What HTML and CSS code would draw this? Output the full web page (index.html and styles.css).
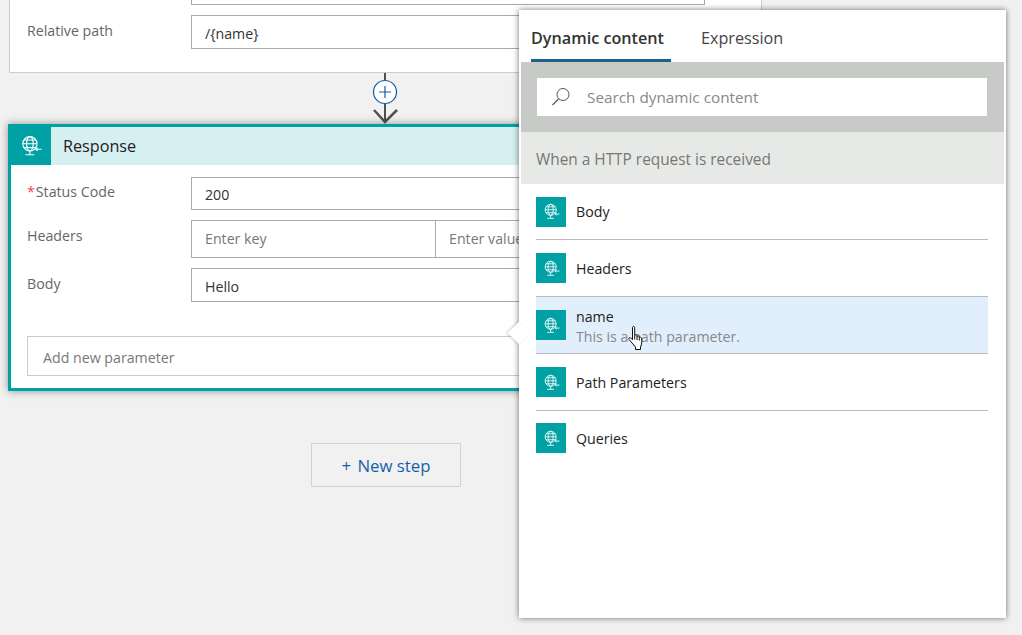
FILE: index.html
```html
<!DOCTYPE html>
<html lang="en">
<head>
  <meta charset="UTF-8" />
  <title>Response - Dynamic content</title>
  <link rel="stylesheet" href="styles.css">
</head>
<body>
  <svg class="defs" width="0" height="0">
    <symbol id="globe" viewBox="0 0 20 20">
      <g fill="none" stroke="#fff" stroke-width="1">
        <circle cx="9" cy="8" r="6.5" />
        <ellipse cx="9" cy="8" rx="3" ry="6.5" />
        <path d="M2.5 8h13M3.5 4.5h11M3.5 11.5h11M9 14.5v3M5 18h8" />
        <path d="M19.5 13h-5M16 11.5l-1.7 1.5 1.7 1.500" />
      </g>
    </symbol>
  </svg>

  <div class="canvas">
    <div class="card top-card">
      <div class="input-stub"></div>
      <div class="row">
        <label class="label">Relative path</label>
        <div class="input">/{name}</div>
      </div>
    </div>

    <svg class="connector" width="26" height="51" viewBox="0 0 26 51">
      <path d="M13 0v50" stroke="#505050" stroke-width="2" fill="none" />
      <path d="M2 37l11 12 12-12" stroke="#505050" stroke-width="2.500" fill="none" />
      <circle cx="13" cy="19" r="11.500" fill="#fff" stroke="#0f5ea8" stroke-width="1.200" />
      <path d="M13 13v12M7 19h12" stroke="#0f5ea8" stroke-width="1.200" fill="none" />
    </svg>

    <div class="card response">
      <div class="response-head">
        <div class="response-icon"><svg width="22" height="22"><use href="#globe" /></svg></div>
        <div class="response-title">Response</div>
      </div>
      <div class="response-body">
        <div class="row">
          <label class="label status-label"><span class="req">*</span>Status Code</label>
          <div class="input status-input">200</div>
        </div>
        <div class="row">
          <label class="label">Headers</label>
          <div class="input-pair">
            <div class="input muted half">Enter key</div>
            <div class="input muted half joined">Enter value</div>
          </div>
        </div>
        <div class="row">
          <label class="label">Body</label>
          <div class="input">Hello</div>
        </div>
        <div class="add-param">Add new parameter</div>
      </div>
    </div>

    <div class="new-step"><span class="plus">+</span> New step</div>
  </div>

  <div class="panel">
    <div class="callout"></div>
    <div class="tabs">
      <div class="tab active">Dynamic content</div>
      <div class="tab">Expression</div>
    </div>
    <div class="search-area">
      <div class="search-box">
        <svg width="20" height="20" viewBox="0 0 20 20">
          <circle cx="12" cy="7.500" r="6" fill="none" stroke="#555" stroke-width="1" />
          <path d="M7.500 12l-6 6" stroke="#555" stroke-width="1.200" fill="none" />
        </svg>
        <span>Search dynamic content</span>
      </div>
    </div>
    <div class="section-head">When a HTTP request is received</div>

    <div class="item first">
      <div class="item-icon"><svg width="17" height="17"><use href="#globe" /></svg></div>
      <div class="item-name">Body</div>
    </div>
    <div class="item">
      <div class="item-icon"><svg width="17" height="17"><use href="#globe" /></svg></div>
      <div class="item-name">Headers</div>
    </div>
    <div class="item hover">
      <div class="item-icon"><svg width="17" height="17"><use href="#globe" /></svg></div>
      <div class="item-text">
        <div class="item-name">name</div>
        <div class="item-desc">This is a path parameter.</div>
      </div>
      <svg class="hand" width="18" height="24" viewBox="0 0 18 24">
        <path d="M4.500 1.500c.2-1.300 2-1.300 2.200 0v8c.3-1 2-1 2.300.2v1c.4-1 2-1 2.300.2v.8c.5-.8 2-.5 2.200.6.600 3.500.2 6-1 8.700v2.500H7.500v-2.500L1 13.500c-.8-1.300.7-2.500 1.800-1.500l1.700 1.800z" fill="#fff" stroke="#111" stroke-width="1" />
        <path d="M6.700 9.500v4M9 10.500v3.500M11.300 11.500v3" stroke="#111" stroke-width="1" fill="none" />
      </svg>
    </div>
    <div class="item">
      <div class="item-icon"><svg width="17" height="17"><use href="#globe" /></svg></div>
      <div class="item-name">Path Parameters</div>
    </div>
    <div class="item last">
      <div class="item-icon"><svg width="17" height="17"><use href="#globe" /></svg></div>
      <div class="item-name">Queries</div>
    </div>
  </div>
</body>
</html>
```

FILE: styles.css
```css
* {
  box-sizing: border-box;
}
html, body {
  height: 100%;
}
body {
  margin: 0;
  background-color: #f1f1f1;
  color: #222;
  font-family: 'Open Sans', 'Noto Sans', sans-serif;
  font-size: 14.2px;
  overflow: hidden;
  position: relative;
}
.defs {
  display: block;
  height: 0;
}
.canvas {
  width: 770px;
  display: flex;
  flex-direction: column;
  align-items: flex-start;
}
.card {
  background: white;
}
.top-card {
  margin-left: 9px;
  width: 753px;
  height: 73px;
  border: 1px solid #ccc;
  border-top: 0;
  padding-left: 17px;
}
.input-stub {
  margin-left: 164px;
  width: 514px;
  height: 5px;
  border: 1px solid #aaa;
  border-top: 0;
}
.top-card .row {
  margin-top: 10px;
}
.row {
  display: flex;
  align-items: flex-start;
}
.label {
  width: 164px;
  flex: none;
  padding-top: 6px;
  color: #666;
}
.status-label {
  padding-top: 5px;
}
.req {
  color: #e8485a;
  margin-right: 1px;
}
.input {
  width: 514px;
  height: 34px;
  padding: 0 13px;
  border: 1px solid #aaa;
  line-height: 35px;
  color: #333;
  background: white;
}
.status-input {
  height: 33px;
  line-height: 33px;
}
.input-pair {
  display: flex;
  width: 514px;
}
.half {
  width: 245px;
  height: 38px;
  line-height: 36px;
}
.joined {
  width: 269px;
  border-left: 0;
}
.muted {
  color: #777;
}
.connector {
  display: block;
  flex: none;
  margin-left: 372px;
}
.response {
  margin-left: 8px;
  width: 754px;
  height: 267px;
  border: 3px solid #00a1a5;
  box-shadow: 0 0 8px rgba(0,0,0,0.4);
}
.response-head {
  display: flex;
  height: 38px;
  background: #d6eff0;
}
.response-icon {
  width: 40px;
  background: #00a1a5;
  display: flex;
  align-items: center;
  justify-content: center;
}
.response-title {
  padding-left: 12px;
  font-size: 16.2px;
  line-height: 38px;
  color: #222;
}
.response-body {
  padding: 12px 0 0 16px;
  display: flex;
  flex-direction: column;
  gap: 10px;
}
.add-param {
  margin-top: 24px;
  width: 700px;
  height: 40px;
  padding-left: 15px;
  border: 1px solid #ccc;
  line-height: 41px;
  color: #777;
}
.new-step {
  margin-top: 52px;
  margin-left: 311px;
  width: 150px;
  height: 44px;
  border: 1px solid #d2d2d2;
  text-align: center;
  line-height: 43px;
  font-size: 16.8px;
  color: #1560a8;
}
.plus {
  margin-right: 2px;
}
.panel {
  position: absolute;
  left: 519px;
  top: 10px;
  width: 487px;
  height: 608px;
  padding: 0 2px;
  background: white;
  box-shadow: 0 0 6px rgba(0,0,0,0.55);
}
.callout {
  position: absolute;
  left: -8px;
  top: 315px;
  width: 16px;
  height: 16px;
  background: white;
  transform: rotate(45deg);
  box-shadow: -1px 1px 3px rgba(0,0,0,0.18);
}
.tabs {
  display: flex;
  gap: 30px;
  height: 52px;
  padding-left: 10px;
  position: relative;
}
.tab {
  font-size: 16.2px;
  line-height: 56px;
  color: #444;
}
.tab.active {
  width: 140px;
  font-weight: 600;
  color: #333;
  border-bottom: 3px solid #1f5f8b;
}
.search-area {
  height: 70px;
  padding: 16px;
  background: #c8cac8;
}
.search-box {
  display: flex;
  align-items: center;
  gap: 16px;
  height: 38px;
  padding-left: 14px;
  margin-right: 1px;
  background: white;
  color: #888;
  font-size: 15.3px;
}
.section-head {
  height: 52px;
  padding-left: 15px;
  background: #e7e9e7;
  line-height: 56px;
  font-size: 15.4px;
  color: #777;
}
.item {
  display: flex;
  align-items: center;
  gap: 10px;
  height: 57px;
  margin: 0 16px 0 15px;
  border-bottom: 1px solid #bbb;
  position: relative;
}
.item.first {
  height: 56px;
}
.item.hover {
  background: #e1eefc;
}
.item.last {
  height: 54px;
  border-bottom: 0;
}
.item-icon {
  width: 30px;
  height: 30px;
  flex: none;
  background: #00a1a5;
  display: flex;
  align-items: center;
  justify-content: center;
}
.item-text {
  padding-top: 3px;
}
.item-name {
  color: #222;
}
.hover .item-name {
  line-height: 19px;
}
.item-desc {
  color: #888;
  line-height: 21px;
}
.hand {
  position: absolute;
  left: 92px;
  top: 29px;
}
```
